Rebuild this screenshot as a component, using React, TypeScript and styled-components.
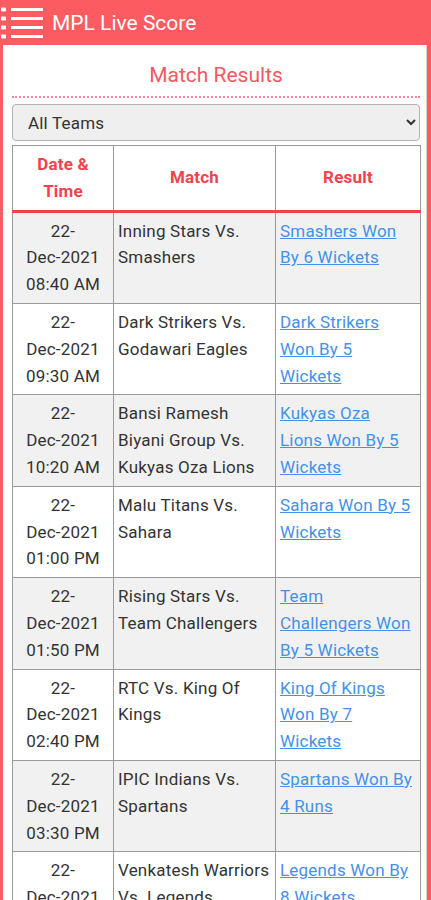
import React from "react";
import styled, { createGlobalStyle } from "styled-components";

const GlobalStyle = createGlobalStyle`
	html, body {
		margin: 0;
		padding: 0;
		background: #fff;
		font-family: Roboto, "Liberation Sans", Arial, sans-serif;
	}
`;

const Page = styled.div`
	width: 431px;
	min-height: 900px;
	box-sizing: border-box;
	border-left: 3px solid #fc5b62;
	border-right: 4px solid #fc5b62;
	background: #fff;
`;

const Header = styled.header`
	height: 45px;
	margin: 0 -4px 0 -3px;
	background: #fc5b62;
	display: flex;
	align-items: center;
	gap: 9px;
	padding-left: 1px;
`;

const Title = styled.h1`
	margin: 0;
	color: #fff;
	font-size: 21px;
	font-weight: 400;
`;

const Body = styled.main`
	padding: 0 6px 0 9px;
	border-right: 1px solid #d8d8d8;
	min-height: 855px;
`;

const Heading = styled.h2`
	margin: 0;
	padding: 18px 0 9px;
	text-align: center;
	color: #f05a62;
	font-size: 21px;
	font-weight: 400;
	border-bottom: 2px dotted #f2889a;
`;

const SelectBox = styled.select`
	display: block;
	width: 100%;
	height: 37px;
	margin-top: 6px;
	padding: 0 8px 0 11px;
	box-sizing: border-box;
	background: #efefef;
	border: 1px solid #b4b4b4;
	border-radius: 4px;
	font-family: inherit;
	font-size: 17px;
	letter-spacing: 0.2px;
	color: #333;
`;

const Table = styled.table`
	width: 408px;
	margin-top: 4px;
	border-collapse: collapse;
	table-layout: fixed;
	font-size: 17px;
	letter-spacing: 0.2px;
	line-height: 26.8px;
	color: #333;
`;

const Th = styled.th`
	border: 1px solid #9a9a9a;
	border-bottom: 3px solid #f0414c;
	padding: 5px;
	color: #f2424e;
	font-weight: 700;
	text-align: center;
	vertical-align: middle;
`;

const Row = styled.tr<{ $odd: boolean }>`
	background: ${(p) => (p.$odd ? "#f1f1f1" : "#fff")};
`;

const Td = styled.td<{ $center?: boolean }>`
	border: 1px solid #9a9a9a;
	padding: 5px 4px;
	vertical-align: top;
	text-align: ${(p) => (p.$center ? "center" : "left")};
`;

const NoWrap = styled.span`
	white-space: nowrap;
`;

const ResultLink = styled.a`
	color: #4491e8;
	text-decoration: underline;
`;

function MenuIcon() {
	return (
		<svg width="42" height="40" viewBox="0 0 42 40">
			{[6, 15, 24, 33].map((y) => (
				<g key={y} fill="#fff">
					<rect x="0" y={y - 1.5} width="5" height="4" rx="1" />
					<rect x="10" y={y - 1} width="32" height="3" />
				</g>
			))}
		</svg>
	);
}

const matches = [
	{ day: "22-", month: "Dec-2021", time: "08:40 AM", match: "Inning Stars Vs. Smashers", result: "Smashers Won By 6 Wickets" },
	{ day: "22-", month: "Dec-2021", time: "09:30 AM", match: "Dark Strikers Vs. Godawari Eagles", result: "Dark Strikers Won By 5 Wickets" },
	{ day: "22-", month: "Dec-2021", time: "10:20 AM", match: "Bansi Ramesh Biyani Group Vs. Kukyas Oza Lions", result: "Kukyas Oza Lions Won By 5 Wickets" },
	{ day: "22-", month: "Dec-2021", time: "01:00 PM", match: "Malu Titans Vs. Sahara", result: "Sahara Won By 5 Wickets" },
	{ day: "22-", month: "Dec-2021", time: "01:50 PM", match: "Rising Stars Vs. Team Challengers", result: "Team Challengers Won By 5 Wickets" },
	{ day: "22-", month: "Dec-2021", time: "02:40 PM", match: "RTC Vs. King Of Kings", result: "King Of Kings Won By 7 Wickets" },
	{ day: "22-", month: "Dec-2021", time: "03:30 PM", match: "IPIC Indians Vs. Spartans", result: "Spartans Won By 4 Runs" },
	{ day: "22-", month: "Dec-2021", time: "04:20 PM", match: "Venkatesh Warriors Vs. Legends", result: "Legends Won By 8 Wickets" },
];

function App() {
	return (
		<>
			<GlobalStyle />
			<Page>
				<Header>
					<MenuIcon />
					<Title>MPL Live Score</Title>
				</Header>
				<Body>
					<Heading>Match Results</Heading>
					<SelectBox defaultValue="all">
						<option value="all">All Teams</option>
					</SelectBox>
					<Table>
						<colgroup>
							<col style={{ width: "101px" }} />
							<col style={{ width: "162px" }} />
							<col style={{ width: "145px" }} />
						</colgroup>
						<thead>
							<tr>
								<Th>Date &amp; Time</Th>
								<Th>Match</Th>
								<Th>Result</Th>
							</tr>
						</thead>
						<tbody>
							{matches.map((m, i) => (
								<Row key={i} $odd={i % 2 === 0}>
									<Td $center>
										{m.day}
										<NoWrap>{m.month}</NoWrap> <NoWrap>{m.time}</NoWrap>
									</Td>
									<Td>{m.match}</Td>
									<Td>
										<ResultLink href="#">{m.result}</ResultLink>
									</Td>
								</Row>
							))}
						</tbody>
					</Table>
				</Body>
			</Page>
		</>
	);
}

export default App;
